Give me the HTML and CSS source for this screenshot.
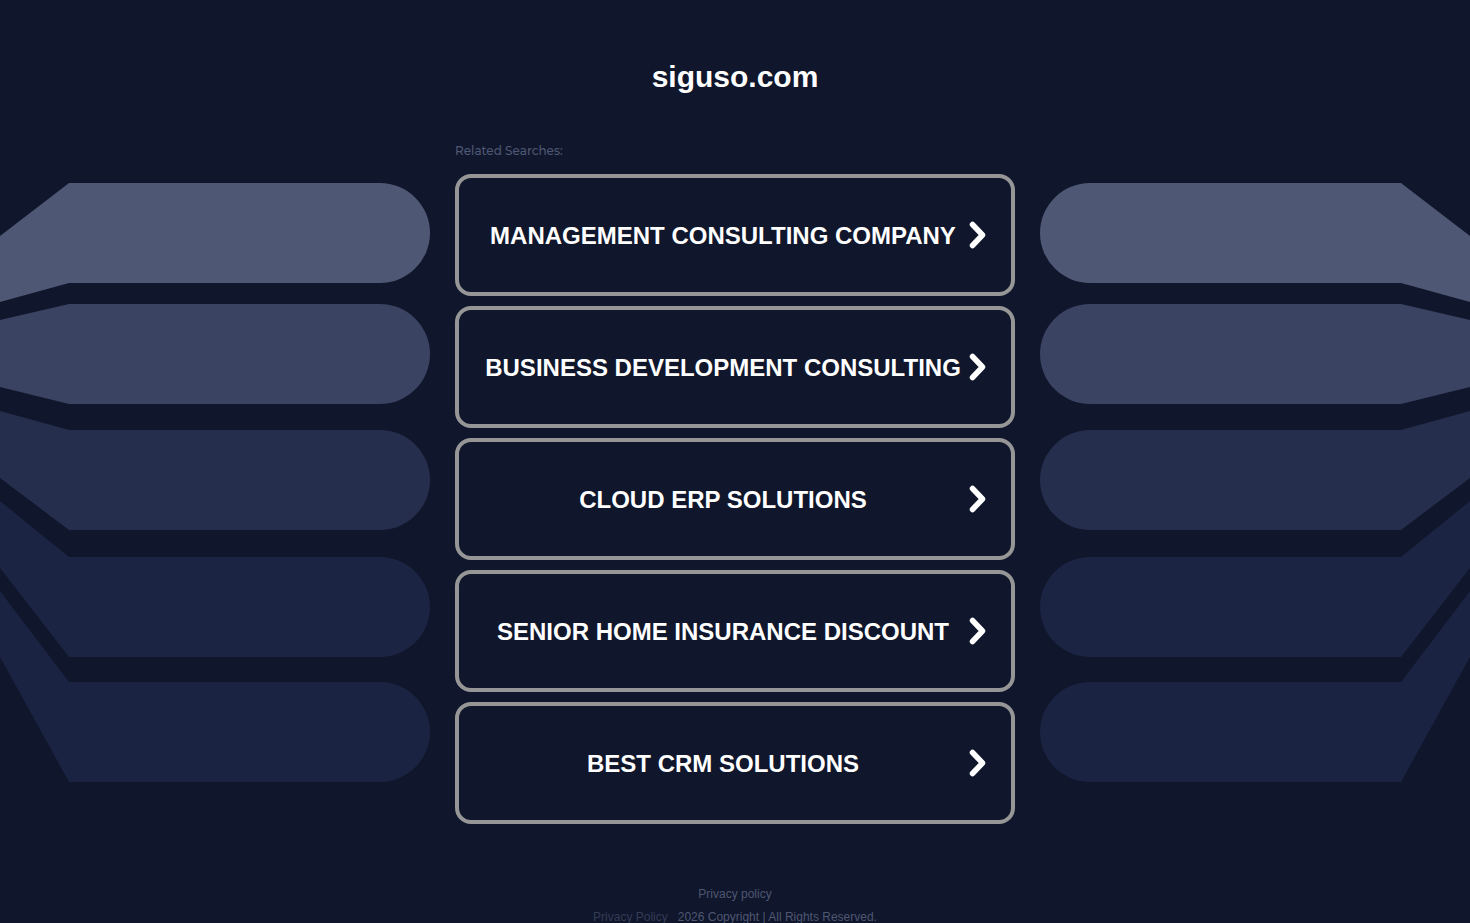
FILE: index.html
```html
<!DOCTYPE html>
<html lang="en">

<head>
  <meta charset="UTF-8">
  <meta name="viewport" content="width=device-width, initial-scale=1">
  <title>siguso.com</title>
  <link rel="stylesheet" href="styles.css">
</head>

<body>
  <svg class="sprite" aria-hidden="true">
    <symbol id="chevron" viewBox="0 0 18 28">
      <path d="M3.500 3.500 L13.500 14 L3.500 24.500" fill="none" stroke="#fff" stroke-width="5.500" stroke-linecap="round" stroke-linejoin="round" />
    </symbol>
    <g id="bars">
      <path fill="#4e5773" d="M-69 106 L69 0 H380 A50 50 0 0 1 380 100 H69 L-69 138 Z" />
      <path fill="#3b4362" d="M-69 153 L69 121 H380 A50 50 0 0 1 380 221 H69 L-69 187 Z" />
      <path fill="#262e4d" d="M-69 209 L69 247 H380 A50 50 0 0 1 380 347 H69 L-69 243 Z" />
      <path fill="#1b2442" d="M-69 262 L69 374 H380 A50 50 0 0 1 380 474 H69 L-69 296 Z" />
      <path fill="#1a2341" d="M-69 317 L69 499 H380 A50 50 0 0 1 380 599 H69 L-69 349 Z" />
    </g>
  </svg>

  <header class="header">
    <h1>siguso.com</h1>
  </header>

  <main class="content">
    <svg class="art art_left" viewBox="0 0 430 600" aria-hidden="true"><use href="#bars" /></svg>
    <div class="searches">
      <p class="label">Related Searches:</p>
      <nav class="links">
        <a href="#"><span>Management Consulting Company</span><svg class="arrow"><use href="#chevron" /></svg></a>
        <a href="#"><span>Business Development Consulting</span><svg class="arrow"><use href="#chevron" /></svg></a>
        <a href="#"><span>Cloud ERP Solutions</span><svg class="arrow"><use href="#chevron" /></svg></a>
        <a href="#"><span>Senior Home Insurance Discount</span><svg class="arrow"><use href="#chevron" /></svg></a>
        <a href="#"><span>Best CRM Solutions</span><svg class="arrow"><use href="#chevron" /></svg></a>
      </nav>
    </div>
    <svg class="art art_right" viewBox="0 0 430 600" aria-hidden="true"><use href="#bars" /></svg>
  </main>

  <footer class="footer">
    <a href="#" class="policy">Privacy policy</a>
    <div class="copyright">
      <a href="#">Privacy Policy</a>
      <span>2026 Copyright | All Rights Reserved.</span>
    </div>
  </footer>
</body>

</html>
```

FILE: styles.css
```css
* {
  margin: 0;
  padding: 0;
  box-sizing: border-box;
}

body {
  background-color: #10162b;
  color: #fff;
  font-family: "Liberation Sans", Arial, sans-serif;
  overflow-x: hidden;
}

a {
  text-decoration: none;
}

.sprite {
  display: block;
  width: 0;
  height: 0;
}

.header {
  padding: 60px 20px 0;
  text-align: center;
}

.header h1 {
  font-size: 30px;
  line-height: 34px;
}

.content {
  display: grid;
  grid-template-columns: 1fr minmax(0, 560px) 1fr;
  column-gap: 25px;
  margin-top: 48px;
}

.art {
  width: 430px;
  height: 600px;
  margin-top: 41px;
  overflow: visible;
}

.art_left {
  justify-self: end;
}

.art_right {
  justify-self: start;
  transform: scaleX(-1);
}

.label {
  margin-bottom: 14px;
  color: #4e5773;
  font-family: Montserrat, Inter, sans-serif;
  font-size: 12px;
  font-weight: 500;
  line-height: 18px;
}

.links {
  display: flex;
  flex-direction: column;
  gap: 10px;
}

.links a {
  display: flex;
  align-items: center;
  min-height: 122px;
  padding-right: 24px;
  border: 4px solid #969696;
  border-radius: 16px;
  color: #fff;
  font-size: 24px;
  font-weight: bold;
  line-height: 28px;
  text-align: center;
  text-transform: uppercase;
}

.links a:hover {
  border-color: #fff;
}

.links span {
  flex: 1;
  margin-right: -18px;
  padding-top: 2px;
}

.arrow {
  flex: none;
  width: 18px;
  height: 28px;
}

.footer {
  padding-top: 62px;
  color: #4e5773;
  text-align: center;
}

.footer a {
  color: #4e5773;
}

.policy {
  display: block;
  font-size: 12px;
  line-height: 16px;
}

.copyright {
  display: flex;
  justify-content: center;
  gap: 10px;
  margin-top: 8px;
  font-size: 12px;
  line-height: 14px;
}

.copyright a {
  color: #343c57;
}
```
